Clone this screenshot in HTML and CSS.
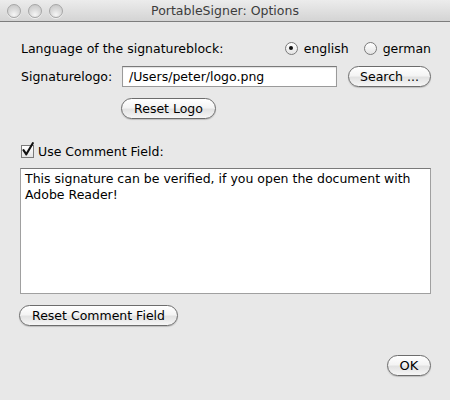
FILE: index.html
```html
<!DOCTYPE html>
<html>
<head>
<meta charset="utf-8">
<link rel="stylesheet" href="styles.css">
</head>
<body>
<div class="window">
  <div class="titlebar">
    <div class="lights">
      <span class="light"></span><span class="light"></span><span class="light"></span>
    </div>
    <div class="title">PortableSigner: Options</div>
  </div>
  <div class="content">
    <div class="row lang">
      <span class="label">Language of the signatureblock:</span>
      <span class="radios">
        <span class="radio-item"><span class="radio on"></span>english</span>
        <span class="radio-item"><span class="radio"></span>german</span>
      </span>
    </div>
    <div class="row logo">
      <span class="label logo-label">Signaturelogo:</span>
      <span class="field">/Users/peter/logo.png</span>
      <span class="btn search">Search ...</span>
    </div>
    <div class="row reset-logo">
      <span class="btn reset-logo-btn">Reset Logo</span>
    </div>
    <div class="row check">
      <span class="checkbox">
        <svg width="16" height="16" viewBox="0 0 16 16"><path d="M3.5 8.2 L6.3 12.3 L12.8 1.2" fill="none" stroke="#111" stroke-width="2.1" stroke-linecap="round" stroke-linejoin="round"/></svg>
      </span>
      <span class="label">Use Comment Field:</span>
    </div>
    <div class="textarea">This signature can be verified, if you open the document with Adobe Reader!</div>
    <div class="row reset-comment">
      <span class="btn reset-comment-btn">Reset Comment Field</span>
    </div>
    <div class="row ok-row">
      <span class="btn ok">OK</span>
    </div>
  </div>
</div>
</body>
</html>
```
FILE: styles.css
```css
html, body {
  margin: 0;
  padding: 0;
}
body {
  width: 450px;
  height: 400px;
  background: #e8e8e8;
  font-family: "DejaVu Sans", "Liberation Sans", sans-serif;
  font-size: 12.5px;
  color: #000;
  overflow: hidden;
}
.window {
  width: 450px;
  height: 400px;
  display: flex;
  flex-direction: column;
}
.titlebar {
  height: 21px;
  border-bottom: 1px solid #7d7d7d;
  background: linear-gradient(#ececec, #d4d4d4);
  display: flex;
  align-items: center;
  position: relative;
}
.lights {
  display: flex;
  gap: 7px;
  padding-left: 7px;
}
.light {
  width: 12px;
  height: 12px;
  border-radius: 50%;
  border: 1px solid #a6a6a6;
  background: radial-gradient(circle at 50% 80%, #f6f6f6 0%, #dcdcdc 45%, #c2c2c2 100%);
  box-shadow: 0 1px 0 rgba(255,255,255,0.6);
}
.title {
  position: absolute;
  left: 0;
  right: 0;
  top: 0;
  height: 21px;
  line-height: 22px;
  text-align: center;
  font-size: 12.5px;
  color: #3c3c3c;
}
.content {
  display: flex;
  flex-direction: column;
  padding: 0 19px 0 20px;
}
.row {
  display: flex;
  align-items: center;
}
.label {
  white-space: nowrap;
}
.lang {
  margin-top: 16px;
  height: 20px;
  padding-left: 1px;
  justify-content: space-between;
}
.radios {
  display: flex;
  gap: 15px;
}
.radio-item {
  display: flex;
  align-items: center;
  gap: 6px;
}
.radio {
  width: 11px;
  height: 11px;
  border-radius: 50%;
  border: 1px solid #7a7a7a;
  background: linear-gradient(#ffffff, #e4e4e4);
  display: flex;
  align-items: center;
  justify-content: center;
}
.radio.on::after {
  content: "";
  width: 4px;
  height: 4px;
  border-radius: 50%;
  background: #111;
}
.logo {
  margin-top: 7px;
  height: 22px;
  padding-left: 1px;
}
.logo-label {
  width: 101px;
}
.field {
  width: 207px;
  height: 19px;
  line-height: 19px;
  padding-left: 6px;
  background: #fff;
  border: 1px solid #9a9a9a;
  border-top-color: #7a7a7a;
  box-shadow: inset 0 1px 1px rgba(0,0,0,0.12);
}
.btn {
  display: inline-flex;
  align-items: center;
  justify-content: center;
  height: 19px;
  border-radius: 11px;
  border: 1px solid #6c6c6c;
  background: linear-gradient(#ffffff 0%, #f4f4f4 45%, #e2e2e2 55%, #f6f6f6 100%);
  box-shadow: 0 1px 1px rgba(0,0,0,0.18);
  white-space: nowrap;
}
.search {
  margin-left: 11px;
  width: 81px;
}
.reset-logo {
  margin-top: 11px;
  padding-left: 101px;
}
.reset-logo-btn {
  width: 93px;
}
.check {
  margin-top: 24px;
  height: 16px;
  padding-left: 1px;
  gap: 4px;
}
.checkbox {
  width: 11px;
  height: 11px;
  border: 1px solid #7a7a7a;
  background: linear-gradient(#ffffff, #e4e4e4);
  position: relative;
}
.checkbox svg {
  position: absolute;
  left: -2px;
  top: -4px;
}
.textarea {
  margin-top: 9px;
  height: 120px;
  padding: 2px 4px;
  background: #fff;
  border: 1px solid #a0a0a0;
  border-top-color: #7a7a7a;
  line-height: 16px;
}
.reset-comment {
  margin-top: 11px;
  margin-left: -1px;
}
.reset-comment-btn {
  width: 157px;
}
.ok-row {
  margin-top: 29px;
  justify-content: flex-end;
}
.ok {
  width: 42px;
  font-size: 13px;
}
```
